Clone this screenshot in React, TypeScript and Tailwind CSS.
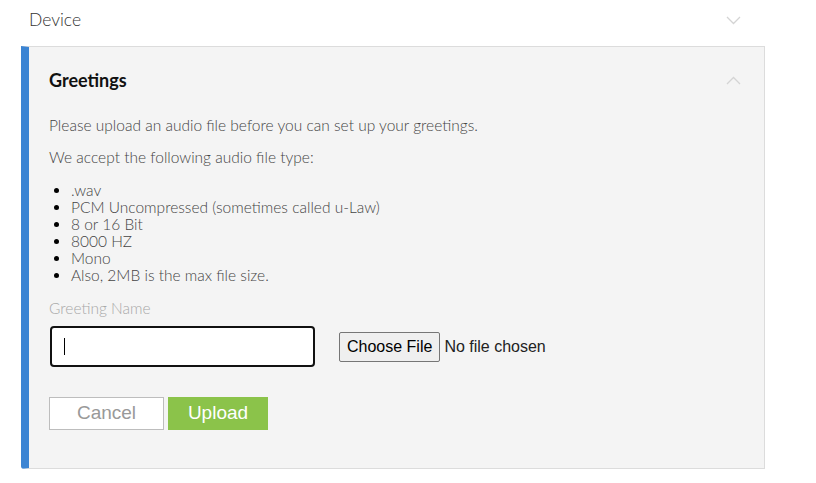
import React from "react";

const lato = { fontFamily: "Lato, 'Noto Sans', sans-serif" };

function ChevronDown() {
  return (
    <svg width="15" height="9" viewBox="0 0 15 9" fill="none">
      <path d="M1 1 L7.5 7.5 L14 1" stroke="#d4d4d4" strokeWidth="1.3" />
    </svg>
  );
}
function ChevronUp() {
  return (
    <svg width="15" height="9" viewBox="0 0 15 9" fill="none">
      <path d="M1 8 L7.5 1.5 L14 8" stroke="#d4d4d4" strokeWidth="1.3" />
    </svg>
  );
}

export default function App() {
  const items = [
    ".wav",
    "PCM Uncompressed (sometimes called u-Law)",
    "8 or 16 Bit",
    "8000 HZ",
    "Mono",
    "Also, 2MB is the max file size.",
  ];
  return (
    <div className="w-[816px] h-[483px] bg-white" style={lato}>
      <div className="flex items-center justify-between h-[46px] pl-[29px] pr-[75px] pb-[6px]">
        <span className="text-[17.5px] font-light text-[#333]">Device</span>
        <ChevronDown />
      </div>
      <div className="ml-[21px] w-[744px] bg-[#f4f4f4] border border-[#dcdcdc] border-l-[8px] border-l-[#3b84d3] rounded-bl-[3px] pl-[20px] pr-[23px] pt-[21px] pb-[38px]">
        <div className="flex items-center justify-between h-[24px]">
          <span className="text-[18px] font-bold text-[#111]">Greetings</span>
          <ChevronUp />
        </div>
        <p className="mt-[24px] text-[15.5px] font-light text-[#444] leading-[18px]">
          Please upload an audio file before you can set up your greetings.
        </p>
        <p className="mt-[14px] text-[15.5px] font-light text-[#444] leading-[18px]">
          We accept the following audio file type:
        </p>
        <ul className="mt-[16px] list-disc pl-[22px] text-[15.5px] font-light text-[#444] leading-[17px] marker:text-black">
          {items.map((t) => (
            <li key={t}>{t}</li>
          ))}
        </ul>
        <div className="mt-[15px] text-[15.5px] font-light text-[#a8a8a8] leading-[18px]">
          Greeting Name
        </div>
        <div className="mt-[9px] flex items-center gap-[24px]">
          <div className="relative ml-[1px]">
            <input
              type="text"
              className="w-[265px] h-[41px] bg-white border-2 border-[#111] rounded-[4px] outline-none"
            />
            <span className="absolute left-[14px] top-[12px] w-[1px] h-[17px] bg-black" />
          </div>
          <input
            type="file"
            className="text-[16px] text-[#222] file:mr-[4px] file:px-[7px] file:py-[2px] file:border file:border-[#767676] file:rounded-[2px] file:bg-[#efefef] file:text-[16px] file:text-black"
            style={{ fontFamily: "'Liberation Sans', Arial, sans-serif" }}
          />
        </div>
        <div className="mt-[30px] flex gap-[4px]" style={{ fontFamily: "'Liberation Sans', Arial, sans-serif" }}>
          <button className="w-[115px] h-[33px] bg-white border border-[#bdbdbd] text-[19px] text-[#999]">
            Cancel
          </button>
          <button className="w-[100px] h-[33px] bg-[#8bc34a] text-[19px] font-medium text-white">
            Upload
          </button>
        </div>
      </div>
    </div>
  );
}
